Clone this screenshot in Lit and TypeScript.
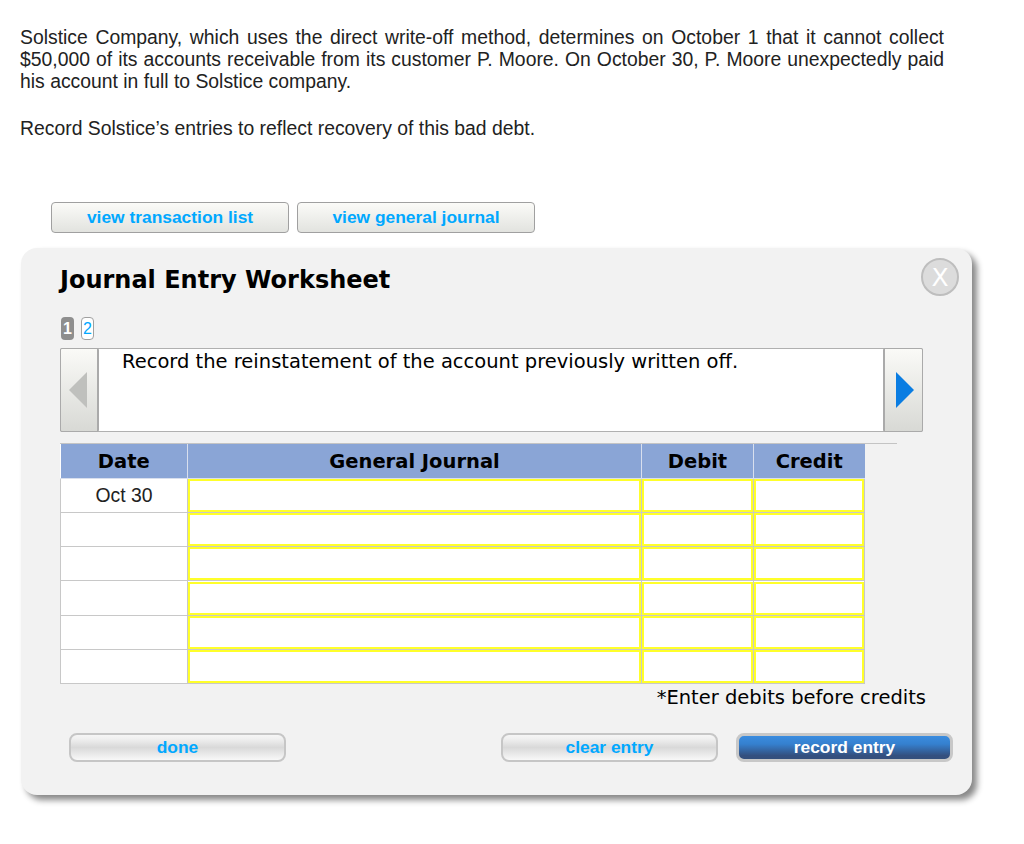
import { LitElement, css, html } from 'lit'
import { customElement } from 'lit/decorators.js'

const ROWS = ['Oct 30', '', '', '', '', '']

@customElement('app-root')
export class AppRoot extends LitElement {
  static styles = css`
    :host {
      display: block;
      width: 1024px;
      height: 844px;
      background: #fff;
      font-family: 'Liberation Sans', Arial, sans-serif;
      color: #222;
      overflow: hidden;
    }

    .question {
      width: 924px;
      margin: 0;
      padding: 26px 0 0 20px;
      font-size: 19.37px;
      line-height: 22px;
      text-align: justify;
    }

    .question p {
      margin: 0 0 25px;
    }

    .top-buttons {
      display: flex;
      gap: 8px;
      margin: 63px 0 15px 51px;
    }

    .top-btn {
      width: 238px;
      height: 31px;
      box-sizing: border-box;
      border: 1px solid #a0a0a0;
      border-radius: 4px;
      background: linear-gradient(#fbfbf8, #e2e3df);
      color: #00a8ff;
      font: bold 17.4px 'Liberation Sans', Arial, sans-serif;
      padding: 0;
    }

    .panel {
      width: 951px;
      height: 547px;
      margin-left: 21px;
      box-sizing: border-box;
      padding: 17px 0 0 39px;
      position: relative;
      background: #f2f2f2;
      border-radius: 16px;
      box-shadow: 5px 5px 6px #888;
      font-family: 'DejaVu Sans', Verdana, sans-serif;
      color: #000;
    }

    h1 {
      margin: 0;
      font-size: 24px;
      line-height: 30px;
      font-weight: bold;
    }

    .close {
      position: absolute;
      top: 10px;
      right: 13px;
      width: 38px;
      height: 38px;
      box-sizing: border-box;
      border: 2px solid #bebebe;
      border-radius: 50%;
      background: #dcdcdc;
      color: #fff;
      display: flex;
      align-items: center;
      justify-content: center;
      font-size: 25px;
    }

    .pager {
      display: flex;
      gap: 7px;
      margin: 22px 0 8px 1px;
      height: 23px;
    }

    .page {
      width: 13px;
      height: 23px;
      box-sizing: border-box;
      border-radius: 4px;
      display: flex;
      align-items: center;
      justify-content: center;
      font: 16px 'Liberation Sans', Arial, sans-serif;
    }

    .page.current {
      background: #8e8e8e;
      color: #fff;
      font-weight: bold;
    }

    .page.other {
      background: #fff;
      border: 1px solid #a0a0a0;
      color: #00a8ff;
    }

    .step {
      width: 863px;
      height: 84px;
      box-sizing: border-box;
      display: flex;
      background: #fff;
      border: 1px solid #b0b0b0;
      border-radius: 2px;
    }

    .arrow {
      width: 39px;
      flex: none;
      margin: -1px;
      box-sizing: border-box;
      border: 1px solid #aaa;
      border-width: 1px 2px 1px 1px;
      border-radius: 2px;
      background: linear-gradient(#fafaf7, #d8d9d5);
      display: flex;
      align-items: center;
      justify-content: center;
      padding-right: 2px;
    }

    .arrow.next {
      width: 40px;
      border-width: 1px 1px 1px 2px;
      padding: 0 0 0 2px;
    }

    .step-text {
      flex: 1;
      padding: 0 0 0 24px;
      font-size: 19.5px;
      line-height: 26px;
    }

    .rule {
      width: 837px;
      height: 1px;
      margin-top: 11px;
      background: #c4c4c4;
    }

    table {
      width: 804px;
      table-layout: fixed;
      border-collapse: collapse;
      background: #fff;
    }

    th {
      height: 34px;
      padding: 1px 0 0;
      box-sizing: border-box;
      background: #8aa5d6;
      border: 1px solid #d8dfee;
      border-top: 0;
      font-size: 19.5px;
      font-weight: bold;
    }

    th:first-child {
      border-left: 0;
    }

    th:last-child {
      border-right: 0;
    }

    td {
      height: 34.33px;
      padding: 0;
      box-sizing: border-box;
      border: 1px solid #c8c8c8;
    }

    td.date {
      text-align: center;
      font: 19.37px 'Liberation Sans', Arial, sans-serif;
      color: #222;
    }

    td.entry {
      padding: 0;
      border: 1px solid #c8c8c8;
    }

    .input {
      height: 33px;
      box-sizing: border-box;
      border: 2px solid #ffff2a;
      background: #fff;
    }

    .note {
      width: 866px;
      text-align: right;
      font-size: 19.5px;
      line-height: 26px;
      padding-top: 1px;
    }

    .actions {
      display: flex;
      margin: 22px 0 0 9px;
      width: 884px;
      gap: 18px;
    }

    .action {
      width: 217px;
      height: 29px;
      box-sizing: border-box;
      border: 2px solid #c6c6c6;
      border-radius: 8px;
      background: linear-gradient(#f6f6f6 0%, #f0f0f0 15%, #d9d9d9 50%, #efefef 85%, #f8f8f8 100%);
      color: #00a8ff;
      font: bold 17.4px 'Liberation Sans', Arial, sans-serif;
      padding: 0;
    }

    .action.first {
      margin-right: 197px;
    }

    .action.primary {
      border: 3px solid #c8c8c8;
      background: linear-gradient(#3a8cdf 0%, #3580cf 35%, #34507f 85%, #344f7c 100%);
      color: #fff;
    }
  `

  render() {
    return html`
      <div class="question">
        <p>
          Solstice Company, which uses the direct write-off method, determines on October 1 that it
          cannot collect $50,000 of its accounts receivable from its customer P. Moore. On October
          30, P. Moore unexpectedly paid his account in full to Solstice company.
        </p>
        <p>Record Solstice’s entries to reflect recovery of this bad debt.</p>
      </div>
      <div class="top-buttons">
        <button class="top-btn">view transaction list</button>
        <button class="top-btn">view general journal</button>
      </div>
      <section class="panel">
        <h1>Journal Entry Worksheet</h1>
        <div class="close">X</div>
        <div class="pager">
          <span class="page current">1</span>
          <span class="page other">2</span>
        </div>
        <div class="step">
          <div class="arrow">
            <svg width="18" height="36" viewBox="0 0 18 36"><path d="M18 0v36L0 18z" fill="#bfc0bd" /></svg>
          </div>
          <div class="step-text">Record the reinstatement of the account previously written off.</div>
          <div class="arrow next">
            <svg width="18" height="36" viewBox="0 0 18 36"><path d="M0 0v36l18-18z" fill="#0a7de2" /></svg>
          </div>
        </div>
        <div class="rule"></div>
        <table>
          <colgroup>
            <col style="width:127px" />
            <col style="width:454px" />
            <col style="width:112px" />
            <col style="width:111px" />
          </colgroup>
          <thead>
            <tr>
              <th>Date</th>
              <th>General Journal</th>
              <th>Debit</th>
              <th>Credit</th>
            </tr>
          </thead>
          <tbody>
            ${ROWS.map(
              (date) => html`
                <tr>
                  <td class="date">${date}</td>
                  <td class="entry"><div class="input"></div></td>
                  <td class="entry"><div class="input"></div></td>
                  <td class="entry"><div class="input"></div></td>
                </tr>
              `,
            )}
          </tbody>
        </table>
        <div class="note">*Enter debits before credits</div>
        <div class="actions">
          <button class="action first">done</button>
          <button class="action">clear entry</button>
          <button class="action primary">record entry</button>
        </div>
      </section>
    `
  }
}
